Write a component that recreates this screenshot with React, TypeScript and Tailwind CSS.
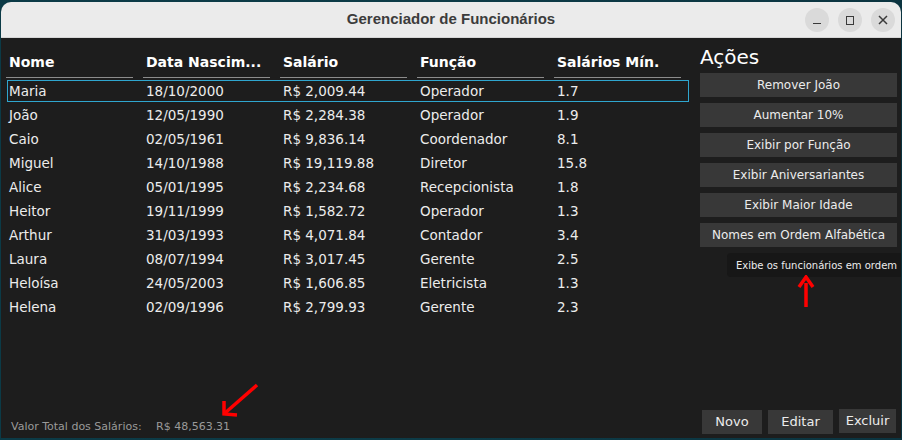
import React from 'react';

const ROWS = [
  ['Maria', '18/10/2000', 'R$ 2,009.44', 'Operador', '1.7'],
  ['João', '12/05/1990', 'R$ 2,284.38', 'Operador', '1.9'],
  ['Caio', '02/05/1961', 'R$ 9,836.14', 'Coordenador', '8.1'],
  ['Miguel', '14/10/1988', 'R$ 19,119.88', 'Diretor', '15.8'],
  ['Alice', '05/01/1995', 'R$ 2,234.68', 'Recepcionista', '1.8'],
  ['Heitor', '19/11/1999', 'R$ 1,582.72', 'Operador', '1.3'],
  ['Arthur', '31/03/1993', 'R$ 4,071.84', 'Contador', '3.4'],
  ['Laura', '08/07/1994', 'R$ 3,017.45', 'Gerente', '2.5'],
  ['Heloísa', '24/05/2003', 'R$ 1,606.85', 'Eletricista', '1.3'],
  ['Helena', '02/09/1996', 'R$ 2,799.93', 'Gerente', '2.3'],
];

const HEADERS = ['Nome', 'Data Nascim...', 'Salário', 'Função', 'Salários Mín.'];

const ACTIONS = [
  'Remover João',
  'Aumentar 10%',
  'Exibir por Função',
  'Exibir Aniversariantes',
  'Exibir Maior Idade',
  'Nomes em Ordem Alfabética',
];

const font = { fontFamily: '"DejaVu Sans", sans-serif' };

export default function App() {
  return (
    <div className="w-[902px] h-[440px] bg-gradient-to-r from-[#0b3a46] via-[#0d3b47] to-[#0b3440] pt-[2px] px-[1px] pb-[2px] overflow-hidden">
      <div className="relative h-full flex flex-col rounded-t-[10px] overflow-hidden" style={font}>
        {/* Title bar */}
        <div className="h-[36px] shrink-0 bg-[#ebebeb] border-b border-[#d6d6d6] flex items-center justify-center relative">
          <span className="text-[15px] font-bold text-[#3c3c3c]" style={{ fontFamily: '"Liberation Sans", sans-serif' }}>
            Gerenciador de Funcionários
          </span>
          <div className="absolute right-[6px] top-[6px] flex gap-[9px]">
            <div className="w-[24px] h-[24px] rounded-full bg-[#dadada] flex items-end justify-center pb-[8px]">
              <div className="w-[8px] h-[1.5px] bg-[#3a3a3a]" />
            </div>
            <div className="w-[24px] h-[24px] rounded-full bg-[#dadada] flex items-center justify-center">
              <div className="w-[8px] h-[9px] border-[1.5px] border-[#3a3a3a]" />
            </div>
            <div className="w-[24px] h-[24px] rounded-full bg-[#dadada] flex items-center justify-center">
              <svg width="10" height="10" viewBox="0 0 10 10">
                <path d="M1 1 L9 9 M9 1 L1 9" stroke="#3a3a3a" strokeWidth="1.5" />
              </svg>
            </div>
          </div>
        </div>

        {/* Body */}
        <div className="flex-1 flex bg-[#1d1d1d]">
          {/* Left: table */}
          <div className="w-[698px] flex flex-col pl-[5px] pt-[10px]">
            <div className="flex h-[30px]">
              {HEADERS.map(h => (
                <div key={h} className="w-[137px] pr-[10px]">
                  <div className="h-full border-b border-[#8c8c8c] pl-[3px] flex items-center text-[14px] font-bold text-white">
                    {h}
                  </div>
                </div>
              ))}
            </div>
            <div className="flex flex-col pt-[1px]">
              {ROWS.map((r, i) => (
                <div key={r[0]} className="h-[24px] flex items-center">
                  <div
                    className={`flex h-[22px] items-center text-[13.5px] text-[#ececec] w-[682px] ml-[1px] border ${i === 0 ? 'border-[#2fa6cf]' : 'border-transparent'}`}
                  >
                    {r.map((c, j) => (
                      <div key={j} className={`pl-[1px] ${j === 4 ? 'w-[127px]' : 'w-[137px]'}`}>
                        {c}
                      </div>
                    ))}
                  </div>
                </div>
              ))}
            </div>
            <div className="flex-1" />
            <div className="flex items-center h-[20px] mb-[1px] pl-[5px] text-[11px] text-[#9a9a9a]">
              <span className="w-[145px]">Valor Total dos Salários:</span>
              <span>R$ 48,563.31</span>
            </div>
          </div>

          {/* Right: actions */}
          <div className="flex-1 flex flex-col pl-[1px] pr-[4px] pt-[6px]">
            <div className="text-[20px] text-white leading-[26px] h-[29px]">Ações</div>
            <div className="flex flex-col gap-[6px]">
              {ACTIONS.map(a => (
                <div key={a} className="h-[24px] bg-[#383838] flex items-center justify-center text-[12px] text-[#ececec]">
                  {a}
                </div>
              ))}
            </div>
            <div className="flex-1" />
            <div className="flex gap-[6px] pl-[2px] pb-[4px] items-end">
              <div className="w-[60px] h-[24px] bg-[#383838] flex items-center justify-center text-[13px] text-[#ececec]">Novo</div>
              <div className="w-[65px] h-[24px] bg-[#383838] flex items-center justify-center text-[13px] text-[#ececec]">Editar</div>
              <div className="w-[57px] h-[24px] mb-[1px] bg-[#383838] flex items-center justify-center text-[13px] text-[#ececec]">Excluir</div>
            </div>
          </div>
        </div>

        {/* Tooltip */}
        <div className="absolute left-[726px] top-[251px] h-[24px] w-[200px] rounded-[4px] bg-[#171717] pl-[9px] flex items-center text-[10px] text-[#ececec] whitespace-nowrap">
          Exibe os funcionários em ordem
        </div>

        {/* Annotation arrows */}
        <svg className="absolute left-[795px] top-[273px]" width="20" height="34" viewBox="0 0 20 34">
          <path d="M10 32 L10 8" stroke="#ff0000" strokeWidth="3.5" />
          <path d="M3 12 L10 2 L17 12" stroke="#ff0000" strokeWidth="3.5" fill="none" />
        </svg>
        <svg className="absolute left-[218px] top-[380px]" width="42" height="36" viewBox="0 0 42 36">
          <path d="M38 3 L6 31" stroke="#ff0000" strokeWidth="3.5" />
          <path d="M5 19 L5 32 L18 33" stroke="#ff0000" strokeWidth="3.5" fill="none" />
        </svg>
      </div>
    </div>
  );
}
